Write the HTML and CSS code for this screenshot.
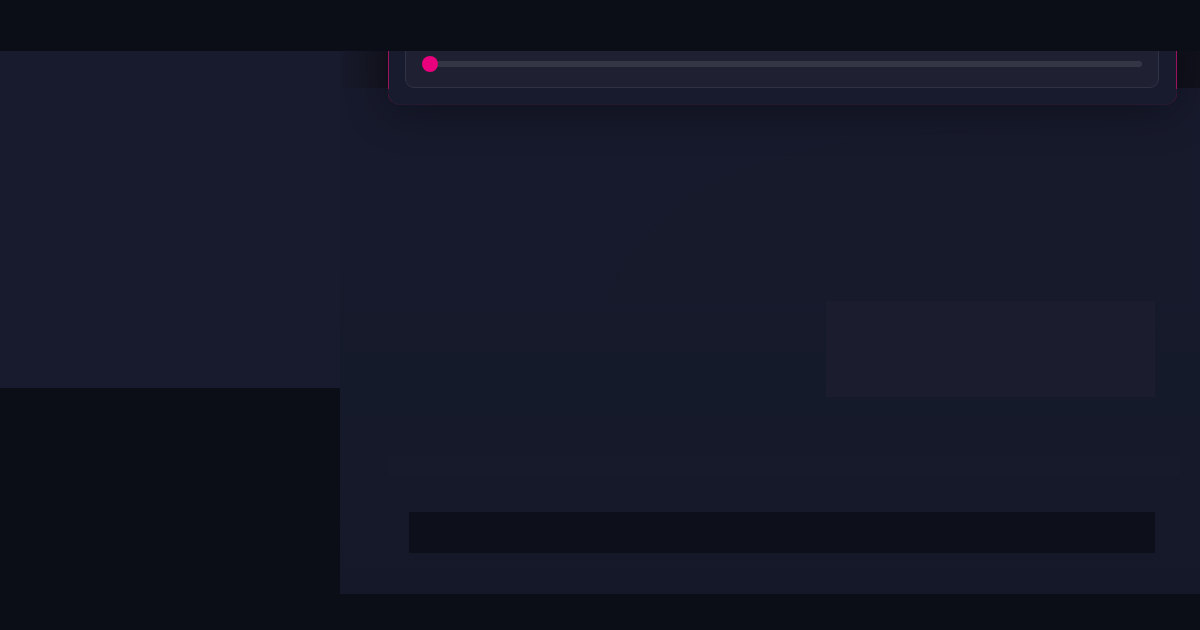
FILE: index.html
```html
<!DOCTYPE html>
<html lang="en">
<head>
<meta charset="utf-8">
<title>Dashboard</title>
<link rel="stylesheet" href="styles.css">
</head>
<body>
<div class="page">
  <header class="topbar"></header>
  <div class="main">
    <aside class="side-panel"></aside>
    <div class="content-col">
      <div class="content-gap"></div>
      <section class="content-panel">
        <div class="chart-area">
          <svg class="chart" viewBox="0 0 780 195" preserveAspectRatio="none">
            <path d="M200 187 C 230 110, 300 60, 420 40 C 520 22, 640 22, 780 22 L780 195 L200 195 Z" fill="#171a2b"/>
          </svg>
        </div>
        <div class="stat-row">
          <div class="stat-box"></div>
        </div>
        <div class="band"></div>
        <div class="input-bar"></div>
      </section>
    </div>
  </div>
  <div class="float-card">
    <div class="slider-box">
      <div class="slider-track">
        <span class="slider-thumb"></span>
      </div>
    </div>
  </div>
</div>
</body>
</html>
```

FILE: styles.css
```css
* { box-sizing: border-box; }
html, body { margin: 0; padding: 0; }
body {
  background: #0b0e17;
  font-family: "Inter", "Liberation Sans", sans-serif;
  width: 1200px;
  height: 630px;
  overflow: hidden;
}
.page {
  position: relative;
  width: 1200px;
  height: 630px;
}
.topbar {
  height: 51px;
  background: #0b0e17;
  position: relative;
  z-index: 3;
}
.main {
  display: flex;
  align-items: flex-start;
}
.side-panel {
  width: 340px;
  height: 337px;
  background: #181b2d;
}
.content-col {
  flex: 1;
  display: flex;
  flex-direction: column;
}
.content-gap {
  height: 37px;
  background: linear-gradient(90deg, #171a2b 0px, #13141f 48px, #10111b 100%);
}
.content-panel {
  height: 506px;
  background: linear-gradient(180deg, #171a2c 0%, #151a2b 60%, #151829 100%);
  padding: 17px 45px 41px 69px;
  display: flex;
  flex-direction: column;
}
.chart-area {
  height: 196px;
  margin-left: 3px;
  margin-right: -35px;
}
.chart {
  display: block;
  width: 100%;
  height: 100%;
}
.stat-row {
  display: flex;
  justify-content: flex-end;
}
.stat-box {
  width: 329px;
  height: 96px;
  background: #1b1d2e;
}
.band {
  height: 20px;
  margin: 59px -25px 0 -20px;
  background: #161a2b;
}
.input-bar {
  margin-top: 36px;
  height: 41px;
  background: #0d0f1a;
}
.float-card {
  position: absolute;
  left: 388px;
  top: 11px;
  width: 789px;
  height: 94px;
  background: #181b2d;
  border: 1px solid rgba(230, 0, 122, 0.12);
  border-left-color: #9c1160;
  border-right-color: #9c1160;
  border-radius: 0 0 12px 12px;
  box-shadow: 0 6px 40px rgba(0, 0, 0, 0.35);
  padding: 0 17px 16px 16px;
  display: flex;
  flex-direction: column;
  justify-content: flex-end;
  z-index: 2;
}
.float-card::after {
  content: "";
  position: absolute;
  left: -1px;
  right: -1px;
  top: 77px;
  bottom: -1px;
  border: 1px solid rgba(230, 0, 122, 0.06);
  border-top: none;
  border-radius: 0 0 12px 12px;
  background: #181b2d;
}
.slider-box {
  position: relative;
  z-index: 1;
  height: 60px;
  background: #1f2133;
  border: 1px solid #2f3244;
  border-radius: 0 0 9px 9px;
  padding: 0 16px 20px 24px;
  display: flex;
  align-items: flex-end;
}
.slider-track {
  position: relative;
  flex: 1;
  height: 6px;
  background: #343646;
  border-radius: 3px;
}
.slider-thumb {
  position: absolute;
  left: -8px;
  top: -5px;
  width: 16px;
  height: 16px;
  border-radius: 50%;
  background: #e8007d;
}
```
